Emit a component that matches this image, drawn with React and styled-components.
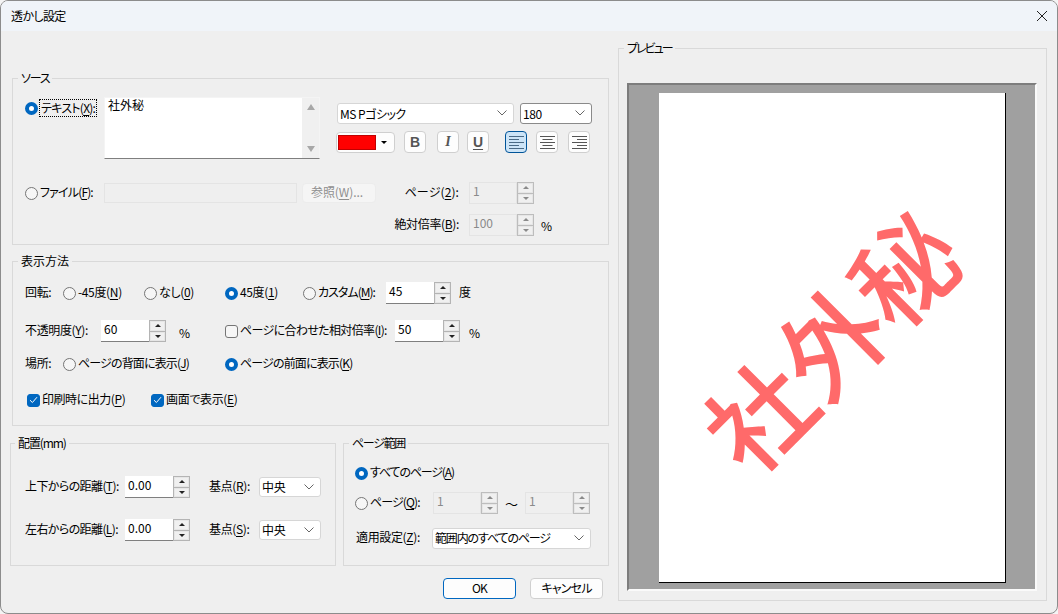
import React from "react";
import styled, { createGlobalStyle } from "styled-components";

const Global = createGlobalStyle`
  html, body { margin: 0; padding: 0; background: #f4f4f4; }
  body { font-family: "Noto Sans CJK JP", "Noto Sans", sans-serif; font-size: 12px; color: #000; font-feature-settings: "palt"; }
  * { box-sizing: border-box; }
`;

const Dialog = styled.div`
  width: 1058px; height: 614px; background: #efefef; overflow: hidden;
  border: 1px solid #8c8c8c; border-radius: 8px; display: flex; flex-direction: column;
`;
const TitleBar = styled.header`
  height: 30px; flex: none; background: #f0f4f9; display: flex; align-items: center; justify-content: space-between;
  padding: 0 9px 0 10px; line-height: 1; letter-spacing: -0.6px;
`;
const CloseBtn = styled.button`
  width: 12px; height: 12px; padding: 0; border: 0; background: none; display: flex;
`;
const Main = styled.main` flex: 1; display: flex; padding-left: 9px; `;
const LeftCol = styled.div` width: 600px; padding-top: 47px; display: flex; flex-direction: column; `;
const RightCol = styled.div` width: 429px; margin-left: 8px; padding-top: 17px; `;

const Group = styled.section`
  position: relative; border: 1px solid #d9d9d9; flex: none;
  width: ${p => p.$w}px; height: ${p => p.$h}px; margin-left: ${p => p.$ml || 0}px; margin-top: ${p => p.$mt || 0}px;
  padding: ${p => p.$pad || "0"};
`;
const Legend = styled.h2`
  position: absolute; top: -9px; left: ${p => p.$left ?? 5}px; margin: 0; padding: 0 3px; background: #efefef;
  font-size: 12px; font-weight: 400; line-height: 16px; letter-spacing: ${p => p.$ls ?? -0.5}px; white-space: nowrap;
`;
const Key = styled.u` text-underline-offset: 2px; text-decoration-thickness: 1px; `;
const Txt = styled.span` display: block; padding-bottom: 3px; white-space: nowrap; letter-spacing: ${p => p.$ls ?? -0.35}px; `;

const Row = styled.div`
  display: flex; align-items: center; height: ${p => p.$h || 22}px; margin-top: ${p => p.$mt || 0}px;
  padding-left: ${p => p.$pl || 0}px;
`;
const Cell = styled.div`
  display: flex; align-items: center; flex: none; width: ${p => p.$w}px; padding-left: ${p => p.$pl || 0}px; white-space: nowrap;
  margin-top: ${p => p.$dy || 0}px;
`;
const Choice = styled.span` display: inline-flex; align-items: center; gap: 2px; white-space: nowrap; `;
const FocusText = styled.span`
  outline: 1px dotted #000; height: 16px; line-height: 15px; padding: 0 1px; white-space: nowrap; letter-spacing: -0.75px;
`;

const RadioMark = styled.span`
  width: 13px; height: 13px; border-radius: 50%; flex: none; display: block;
  ${p => p.$on
    ? "background: #fff; border: 4px solid #0067c0;"
    : "background: #f6f6f6; border: 1px solid #757575;"}
`;
const CheckMark = styled.span`
  width: 13px; height: 13px; border-radius: 3px; flex: none; display: flex; align-items: center; justify-content: center;
  ${p => p.$on ? "background: #0067c0; border: 1px solid #0067c0;" : "background: #f6f6f6; border: 1px solid #757575;"}
`;
const Check = ({ on }) => (
  <CheckMark $on={on}>
    {on && <svg width="9" height="8" viewBox="0 0 9 8"><path d="M1 4.2 L3.4 6.5 L8 1.2" fill="none" stroke="#fff" strokeWidth="1"/></svg>}
  </CheckMark>
);

const SpinBox = styled.div` display: flex; flex: none; width: ${p => p.$w || 64}px; height: 22px; `;
const SpinField = styled.div`
  flex: 1; padding: 0 3px 4px; display: flex; align-items: center; line-height: 1;
  ${p => p.$off
    ? "background: #efefef; border: 1px solid #e4e4e4; color: #8a8a8a;"
    : "background: #fff; border-bottom: 1px solid #7f7f7f; color: #000;"}
`;
const SpinBtns = styled.div`
  width: 17px; flex: none; background: ${p => p.$off ? "#bdbdbd" : "#b4b4b4"}; padding: 1px; display: flex; flex-direction: column; gap: 1px;
`;
const SpinBtn = styled.div`
  flex: 1; background: #f0f0f0; border: 1px solid #e6e6e6; display: flex; align-items: center; justify-content: center;
`;
const Tri = styled.span`
  width: 0; height: 0; border-left: 3px solid transparent; border-right: 3px solid transparent;
  ${p => p.$up ? "border-bottom" : "border-top"}: 3px solid ${p => p.$off ? "#8a8a8a" : "#222"};
`;
const Spin = ({ value, off, w }) => (
  <SpinBox $w={w}>
    <SpinField $off={off}>{value}</SpinField>
    <SpinBtns $off={off}>
      <SpinBtn><Tri $up $off={off}/></SpinBtn>
      <SpinBtn><Tri $off={off}/></SpinBtn>
    </SpinBtns>
  </SpinBox>
);

const SelectBox = styled.div`
  width: ${p => p.$w}px; height: ${p => p.$h || 21}px; flex: none; background: #fff; border-radius: 3px;
  border: 1px solid ${p => p.$dark ? "#8a8a8a" : "#d6d6d6"}; display: flex; align-items: center; justify-content: space-between;
  padding: 0 6px 1px 2px; white-space: nowrap; letter-spacing: ${p => p.$ls ?? -0.35}px;
`;
const Chevron = () => (
  <svg width="10" height="6" viewBox="0 0 10 6"><path d="M0.5 0.5 L5 5 L9.5 0.5" fill="none" stroke="#666" strokeWidth="1"/></svg>
);
const Select = ({ w, h, dark, ls, children }) => (
  <SelectBox $w={w} $h={h} $dark={dark} $ls={ls}><span>{children}</span><Chevron/></SelectBox>
);

/* source group */
const SourceTop = styled.div` display: flex; `;
const RadioCol = styled.div` width: 79px; flex: none; padding-top: 3px; display: flex; align-items: flex-start; `;
const TextBox = styled.div`
  width: 216px; height: 62px; flex: none; background: #fff; display: flex; border: 1px solid #f4f4f4; border-bottom: 1px solid #7f7f7f;
`;
const TextValue = styled.div` flex: 1; padding: 0 3px; font-feature-settings: normal; line-height: 14px; `;
const ScrollTrack = styled.div`
  width: 17px; background: #f0f0f0; display: flex; flex-direction: column; justify-content: space-between; align-items: center; padding: 6px 0;
`;
const ScrollTri = styled.span`
  width: 0; height: 0; border-left: 4.5px solid transparent; border-right: 4.5px solid transparent;
  ${p => p.$up ? "border-bottom" : "border-top"}: 6px solid #a8a8a8;
`;
const FontCol = styled.div` margin-left: 16px; padding-top: 6px; display: flex; flex-direction: column; gap: 7px; `;
const FontRow = styled.div` display: flex; align-items: center; gap: 6px; padding-left: 1px; `;
const ToolRow = styled.div` display: flex; align-items: center; height: 22px; `;
const ColorBtn = styled.button`
  width: 59px; height: 21px; padding: 0 7px 0 1px; background: #fdfdfd; border: 1px solid #cfcfcf; border-radius: 4px;
  display: flex; align-items: center; justify-content: space-between; margin-right: 9px;
`;
const Swatch = styled.span` width: 38px; height: 15px; background: #f00; border: 1px solid #c00000; `;
const SmallArrow = styled.span` width: 0; height: 0; border-left: 3px solid transparent; border-right: 3px solid transparent; border-top: 3px solid #000; `;
const ToolBtn = styled.button`
  width: 22px; height: 22px; flex: none; padding: 0; border-radius: 4px; margin-left: ${p => p.$ml || 0}px;
  display: flex; align-items: center; justify-content: center;
  font-family: "Liberation Serif", serif; font-size: 14px; color: #555; font-weight: 700; line-height: 1;
  background: ${p => p.$on ? "#cce4f7" : "#fdfdfd"};
  border: 1px solid ${p => p.$on ? "#005499" : "#cfcfcf"};
  font-style: ${p => p.$it ? "italic" : "normal"};
  text-decoration: ${p => p.$un ? "underline" : "none"};
  text-underline-offset: 2px;
`;
const SansLetter = styled.span` font-family: "Liberation Sans", sans-serif; `;
const AlignIcon = ({ kind }) => {
  const widths = [15, 10, 15, 10, 15];
  return (
    <svg width="15" height="13" viewBox="0 0 15 13">
      {widths.map((w, i) => {
        const x = kind === "left" ? 0 : kind === "right" ? 15 - w : (15 - w) / 2;
        return <rect key={i} x={x} y={i * 3} width={w} height="1" fill={kind === "left" ? "#4a6a85" : "#555"} />;
      })}
    </svg>
  );
};
const FileGrid = styled.div`
  display: grid; grid-template-columns: 79px 198px 74px 93px 65px auto; grid-auto-rows: 22px; row-gap: 10px; margin-top: 23px; align-items: center;
`;
const FileInput = styled.div` width: 193px; height: 20px; background: #efefef; border: 1px solid #e4e4e4; `;
const BrowseBtn = styled.div`
  width: 74px; height: 20px; background: #f5f5f5; border: 1px solid #ececec; border-radius: 4px; color: #8f8f8f; padding: 0 0 3px 8px;
  display: flex; align-items: center; white-space: nowrap; letter-spacing: -0.1px; line-height: 1;
`;
const RightLabel = styled.div`
  grid-column: ${p => p.$col}; text-align: right; padding: 0 10px 3px 0; white-space: nowrap; letter-spacing: ${p => p.$ls ?? -0.35}px;
`;
const Unit = styled.span` margin-left: ${p => p.$ml || 7}px; margin-top: ${p => p.$dy || 0}px; font-size: 12px; `;
const Tilde = styled.span` width: 27px; flex: none; text-align: center; font-size: 13px; font-feature-settings: normal; `;

/* bottom */
const BottomRow = styled.div` display: flex; gap: 7px; margin-top: 17px; `;
const Buttons = styled.div` display: flex; justify-content: flex-end; gap: 14px; margin-top: 12px; padding-right: 7px; `;
const DlgBtn = styled.button`
  width: 73px; height: 21px; padding: 0 0 2px; background: #fdfdfd; border-radius: 4px;
  font: inherit; font-feature-settings: "palt"; color: #000; line-height: 1; letter-spacing: -0.8px;
  border: ${p => p.$def ? "1px solid #0067c0" : "1px solid #d0d0d0"};
`;

/* preview */
const PreviewBox = styled.div`
  margin: 34px 0 0 8px; width: 410px; height: 508px; background: #a0a0a0; padding: 8px 0 0 30px;
  border: 2px solid; border-color: #7d7d7d #fafafa #fafafa #7d7d7d;
`;
const Page = styled.div`
  width: 347px; height: 490px; background: #fff; border-right: 1px solid #000; border-bottom: 1px solid #000;
  display: flex; align-items: center; justify-content: center; overflow: hidden;
`;
const Watermark = styled.div`
  font-size: 103px; font-weight: 500; line-height: 1; color: #ff6a6a; white-space: nowrap; font-feature-settings: normal; flex: none;
  font-family: "Noto Sans CJK JP", sans-serif; transform: translate(-4px, 2px) rotate(-45deg);
`;

export default function App() {
  return (
    <>
      <Global />
      <Dialog>
        <TitleBar>
          <span>透かし設定</span>
          <CloseBtn aria-label="閉じる">
            <svg width="12" height="12" viewBox="0 0 12 12"><path d="M1 1 L11 11 M11 1 L1 11" stroke="#222" strokeWidth="1" /></svg>
          </CloseBtn>
        </TitleBar>
        <Main>
          <LeftCol>
            <Group $w={597} $h={167} $ml={2} $pad="18px 0 0 12px">
              <Legend $ls={-1.2}>ソース</Legend>
              <SourceTop>
                <RadioCol>
                  <Choice><RadioMark $on /><FocusText>テキスト(<Key>X</Key>):</FocusText></Choice>
                </RadioCol>
                <TextBox>
                  <TextValue>社外秘</TextValue>
                  <ScrollTrack><ScrollTri $up /><ScrollTri /></ScrollTrack>
                </TextBox>
                <FontCol>
                  <FontRow>
                    <Select w={177} ls={-0.5}>MS Pゴシック</Select>
                    <Select w={72} dark>180</Select>
                  </FontRow>
                  <ToolRow>
                    <ColorBtn><Swatch /><SmallArrow /></ColorBtn>
                    <ToolBtn><SansLetter>B</SansLetter></ToolBtn>
                    <ToolBtn $ml={11} $it>I</ToolBtn>
                    <ToolBtn $ml={8} $un><SansLetter>U</SansLetter></ToolBtn>
                    <ToolBtn $ml={16} $on><AlignIcon kind="left" /></ToolBtn>
                    <ToolBtn $ml={9}><AlignIcon kind="center" /></ToolBtn>
                    <ToolBtn $ml={10}><AlignIcon kind="right" /></ToolBtn>
                  </ToolRow>
                </FontCol>
              </SourceTop>
              <FileGrid>
                <Choice><RadioMark /><Txt $ls={-0.85}>ファイル(<Key>F</Key>):</Txt></Choice>
                <FileInput />
                <BrowseBtn><span>参照(<Key>W</Key>)...</span></BrowseBtn>
                <RightLabel $ls={0.1}>ページ(<Key>2</Key>):</RightLabel>
                <Spin value="1" off w={65} />
                <span />
                <RightLabel $col={4}>絶対倍率(<Key>B</Key>):</RightLabel>
                <Spin value="100" off w={65} />
                <Unit>%</Unit>
              </FileGrid>
            </Group>

            <Group $w={597} $h={165} $ml={2} $mt={16} $pad="20px 0 0 12px">
              <Legend $ls={0}>表示方法</Legend>
              <Row>
                <Cell $w={38}><Txt>回転:</Txt></Cell>
                <Cell $w={81}><Choice><RadioMark /><Txt>-45度(<Key>N</Key>)</Txt></Choice></Cell>
                <Cell $w={81}><Choice><RadioMark /><Txt>なし(<Key>0</Key>)</Txt></Choice></Cell>
                <Cell $w={78}><Choice><RadioMark $on /><Txt>45度(<Key>1</Key>)</Txt></Choice></Cell>
                <Cell $w={83}><Choice><RadioMark /><Txt $ls={-1}>カスタム(<Key>M</Key>):</Txt></Choice></Cell>
                <Spin value="45" w={65} />
                <Unit $ml={8} $dy={-3}>度</Unit>
              </Row>
              <Row $mt={16}>
                <Cell $w={76}><Txt>不透明度(<Key>Y</Key>):</Txt></Cell>
                <Spin value="60" w={65} />
                <Cell $w={59} $pl={13} $dy={2}>%</Cell>
                <Cell $w={170}><Choice><Check /><Txt $ls={-0.65}>ページに合わせた相対倍率(<Key>I</Key>):</Txt></Choice></Cell>
                <Spin value="50" w={65} />
                <Unit $ml={9} $dy={2}>%</Unit>
              </Row>
              <Row $mt={11}>
                <Cell $w={38}><Txt>場所:</Txt></Cell>
                <Cell $w={162}><Choice><RadioMark /><Txt $ls={-0.85}>ページの背面に表示(<Key>J</Key>)</Txt></Choice></Cell>
                <Cell $w={160}><Choice><RadioMark $on /><Txt $ls={-0.85}>ページの前面に表示(<Key>K</Key>)</Txt></Choice></Cell>
              </Row>
              <Row $mt={14} $pl={2}>
                <Cell $w={124}><Choice><Check on /><Txt $ls={-0.45}>印刷時に出力(<Key>P</Key>)</Txt></Choice></Cell>
                <Cell $w={120}><Choice><Check on /><Txt>画面で表示(<Key>E</Key>)</Txt></Choice></Cell>
              </Row>
            </Group>

            <BottomRow>
              <Group $w={326} $h={123} $pad="32px 0 0 14px">
                <Legend $left={4} $ls={-1.1}>配置(mm)</Legend>
                <Row>
                  <Cell $w={100}><Txt $ls={-0.6}>上下からの距離(<Key>T</Key>):</Txt></Cell>
                  <Spin value="0.00" w={65} />
                  <Cell $w={69} $pl={19}><Txt>基点(<Key>R</Key>):</Txt></Cell>
                  <Select w={62} h={20}>中央</Select>
                </Row>
                <Row $mt={21}>
                  <Cell $w={100}><Txt $ls={-0.6}>左右からの距離(<Key>L</Key>):</Txt></Cell>
                  <Spin value="0.00" w={65} />
                  <Cell $w={69} $pl={19}><Txt>基点(<Key>S</Key>):</Txt></Cell>
                  <Select w={62} h={20}>中央</Select>
                </Row>
              </Group>
              <Group $w={266} $h={123} $pad="18px 0 0 11px">
                <Legend $ls={-1.3}>ページ範囲</Legend>
                <Row><Choice><RadioMark $on /><Txt $ls={-1.15}>すべてのページ(<Key>A</Key>)</Txt></Choice></Row>
                <Row $mt={8}>
                  <Cell $w={78}><Choice><RadioMark /><Txt $ls={-0.9}>ページ(<Key>Q</Key>):</Txt></Choice></Cell>
                  <Spin value="1" off w={65} />
                  <Tilde>〜</Tilde>
                  <Spin value="1" off w={65} />
                </Row>
                <Row $mt={13}>
                  <Cell $w={77} $pl={1}><Txt>適用設定(<Key>Z</Key>):</Txt></Cell>
                  <Select w={159} ls={-1.15}>範囲内のすべてのページ</Select>
                </Row>
              </Group>
            </BottomRow>
            <Buttons>
              <DlgBtn $def>OK</DlgBtn>
              <DlgBtn>キャンセル</DlgBtn>
            </Buttons>
          </LeftCol>
          <RightCol>
            <Group $w={429} $h={553}>
              <Legend $ls={-2}>プレビュー</Legend>
              <PreviewBox>
                <Page><Watermark>社外秘</Watermark></Page>
              </PreviewBox>
            </Group>
          </RightCol>
        </Main>
      </Dialog>
    </>
  );
}
